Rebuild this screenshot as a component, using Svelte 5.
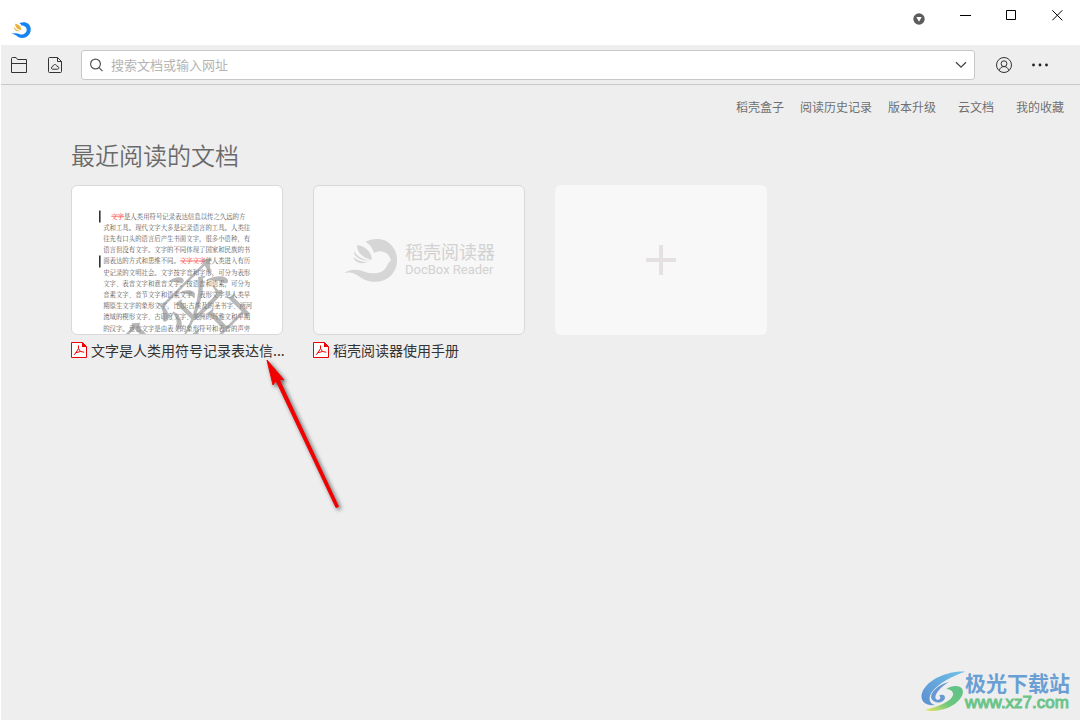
<script lang="ts">
  interface NavLink {
    label: string;
    href: string;
  }

  const navLinks: NavLink[] = [
    { label: '稻壳盒子', href: '#box' },
    { label: '阅读历史记录', href: '#history' },
    { label: '版本升级', href: '#upgrade' },
    { label: '云文档', href: '#cloud' },
    { label: '我的收藏', href: '#favorites' }
  ];

  // first line and fifth line carry struck-out words, see `strike`
  const pageLines = [
    { x: 80, before: '', strike: '文字', after: '是人类用符号记录表达信息以传之久远的方' },
    { x: 0, before: '式和工具。现代文字大多是记录语言的工具。人类往' },
    { x: 0, before: '往先有口头的语言后产生书面文字，很多小语种，有' },
    { x: 0, before: '语言但没有文字。文字的不同体现了国家和民族的书' },
    { x: 0, before: '面表达的方式和思维不同。', strike: '文字文字', after: '使人类进入有历' },
    { x: 0, before: '史记录的文明社会。文字按字音和字形，可分为表形' },
    { x: 0, before: '文字、表音文字和意音文字。按语音和语素，可分为' },
    { x: 0, before: '音素文字、音节文字和语素文字。表形文字是人类早' },
    { x: 0, before: '期原生文字的象形文字，比如:古埃及的圣书字、两河' },
    { x: 0, before: '流域的楔形文字、古印度文字、美洲的玛雅文和早期' },
    { x: 0, before: '的汉字。意音文字是由表义的象形符号和表音的声旁' }
  ];

  let query = $state('');
</script>

{#snippet pdfIcon()}
  <svg class="pdf-icon" width="16" height="16" viewBox="0 0 16 16" aria-hidden="true">
    <path d="M.5 .5h11l4 4v11H.5z" fill="#fff" stroke="#f00000" />
    <path d="M11 0l5 5h-5z" fill="#f00000" />
    <path d="M7.500 3.500V6.500L4.500 11.500L2.800 12.700M7.500 6.500L9.500 9.500L13.200 10.200M4.500 10.800L9.500 9.500" fill="none" stroke="#f00000" />
  </svg>
{/snippet}

<div class="window">
  <header class="title-bar">
    <svg class="app-logo" width="20" height="18" viewBox="0 0 160 135" role="img" aria-label="DocBox">
      <path d="M68 14C98-6 160 4 158 66C156 120 98 146 58 124C42 112 22 98 0 98C26 90 52 94 70 102C98 110 124 92 126 68C126 44 108 32 84 32C80 24 76 18 68 14z" fill="#1683f5" />
      <path d="M32 18C62 20 84 42 82 68C56 66 34 48 32 18zM22 42C34 58 50 72 74 76C48 84 22 68 22 42z" fill="#e8b13c" />
    </svg>
    <div class="window-controls">
      <button aria-label="Menu">
        <svg width="12" height="12" viewBox="0 0 12 12" class="menu-dot">
          <circle cx="6" cy="6" r="5.700" fill="#5c5c5c" />
          <path d="M3.300 4h5.400L6 8.700z" fill="#fff" />
        </svg>
      </button>
      <button aria-label="Minimize">
        <svg width="11" height="11" viewBox="0 0 11 11"><path d="M0 5.500h11" stroke="#000" /></svg>
      </button>
      <button aria-label="Maximize">
        <svg width="11" height="11" viewBox="0 0 11 11"><path d="M.5 .5h9v9h-9z" fill="none" stroke="#000" /></svg>
      </button>
      <button aria-label="Close">
        <svg width="11" height="11" viewBox="0 0 11 11"><path d="M.3 .3l10 10M10.300 .3L.3 10.300" stroke="#000" /></svg>
      </button>
    </div>
  </header>

  <div class="toolbar">
    <button class="tool-btn" aria-label="Open folder">
      <svg width="16" height="16" viewBox="0 0 16 16" fill="none" stroke="#333">
        <path d="M.5 15.500V1.500Q.5 .5 1.500 .5H5L6.500 2.500H15.500V15.500zM.5 6.500h15" />
      </svg>
    </button>
    <button class="tool-btn" aria-label="Cloud document">
      <svg width="14" height="16" viewBox="0 0 14 16" fill="none" stroke="#333">
        <path d="M9.500 .5H1.500Q.5 .5 .5 1.500V14.500Q.5 15.500 1.500 15.500H12.500Q13.500 15.500 13.500 14.500V4.500zM9.500 .5V4.500H13.500" />
        <path d="M4.500 12.200C2.800 12 2.900 9.600 4.800 9.600C5 7 8.600 6.800 9 9.400C11.300 9.300 11.400 12.200 9.500 12.200z" />
      </svg>
    </button>
    <div class="search-box">
      <svg width="14" height="14" viewBox="0 0 14 14" fill="none" stroke="#555" stroke-width="1.200">
        <circle cx="5.500" cy="6" r="4.900" />
        <path d="M9 9.700l3.500 3.500" />
      </svg>
      <input type="text" aria-label="搜索文档或输入网址" placeholder="搜索文档或输入网址" bind:value={query} />
      <button class="drop-btn" aria-label="Show history">
        <svg width="12" height="8" viewBox="0 0 12 8" fill="none" stroke="#444" stroke-width="1.300"><path d="M1 1.200l5 5 5-5" /></svg>
      </button>
    </div>
    <button class="tool-btn" aria-label="Account">
      <svg width="16" height="16" viewBox="0 0 16 16" fill="none" stroke="#333">
        <circle cx="8" cy="8" r="7.500" />
        <circle cx="8" cy="6.700" r="2.900" />
        <path d="M3.300 13.500C4 10.800 5.500 9.600 8 9.600s4 1.200 4.700 3.900" />
      </svg>
    </button>
    <button class="tool-btn" aria-label="More">
      <svg width="16" height="4" viewBox="0 0 16 4" fill="#222">
        <circle cx="1.500" cy="2" r="1.400" />
        <circle cx="8" cy="2" r="1.400" />
        <circle cx="14.500" cy="2" r="1.400" />
      </svg>
    </button>
  </div>

  <nav class="quick-links">
    {#each navLinks as link}
      <a href={link.href}>{link.label}</a>
    {/each}
  </nav>

  <main>
    <h1>最近阅读的文档</h1>
    <div class="documents">
      <div class="document">
        <a class="document-link" href="#doc-1">
          <span class="card page">
            <svg class="page-preview" viewBox="0 0 2100 1480" aria-hidden="true">
              <g font-size="64" fill="#555">
                {#each pageLines as line, i}
                  <text x={312 + line.x} y={325 + i * 112}>{line.before}{#if line.strike}<tspan class="strike">{line.strike}</tspan>{line.after}{/if}</text>
                {/each}
              </g>
              <path d="M278 245v120M278 695v120" stroke="#333" stroke-width="16" />
              <text class="stamp" font-size="860" transform="translate(619 2333) rotate(-45)">机密</text>
            </svg>
          </span>
          <span class="caption">{@render pdfIcon()}<span class="name">文字是人类用符号记录表达信...</span></span>
        </a>
        <svg class="pointer" width="90" height="165" viewBox="0 0 90 165" aria-hidden="true">
          <path d="M6 5L12 30L15 25.500L75 152.500L77.500 151.500L18 24L23 25z" fill="#f00000" stroke="#f00000" stroke-linejoin="round" />
        </svg>
      </div>

      <div class="document">
        <a class="document-link" href="#doc-2">
          <span class="card">
            <svg width="54" height="45" viewBox="130 175 160 135" fill="#d6d6d6" aria-hidden="true">
              <path d="M196 187C216 175 249 173 270 192C297 216 298 260 275 285C250 312 209 312 183 294C166 281 153 275 133 280C153 266 176 270 193 276C226 288 257 278 263 253L273 242C266 216 242 209 222 220C218 207 210 193 196 187z" />
              <path d="M171 196C196 199 217 218 215 241C190 236 170 219 171 196zM162 213C169 229 186 240 210 243C184 244 160 233 162 213zM160 231C169 242 185 246 204 247C185 255 163 249 160 231z" />
            </svg>
            <span class="brand">
              <span class="brand-cn">稻壳阅读器</span>
              <span class="brand-en">DocBox Reader</span>
            </span>
          </span>
          <span class="caption">{@render pdfIcon()}<span class="name">稻壳阅读器使用手册</span></span>
        </a>
      </div>

      <button class="card add" aria-label="Add document">
        <svg width="30" height="30" viewBox="0 0 30 30"><path d="M15 0v30M0 15h30" stroke="#e5e1e2" stroke-width="4" /></svg>
      </button>
    </div>
  </main>

  <div class="site-mark">
    <svg width="44" height="42" viewBox="0 0 132 126" aria-hidden="true">
      <defs>
        <linearGradient id="mark-blue" x1="0" y1="1" x2="1" y2="0">
          <stop offset="0" stop-color="#5b8fd0" />
          <stop offset="1" stop-color="#6fc0e8" />
        </linearGradient>
        <linearGradient id="mark-green" x1="0" y1="1" x2="1" y2="0">
          <stop offset="0" stop-color="#e9e65a" />
          <stop offset=".45" stop-color="#6cc77f" />
          <stop offset="1" stop-color="#5fc08a" />
        </linearGradient>
      </defs>
      <path d="M132 2C84 0 20 22 3 66C-4 90 14 106 42 102C26 98 20 84 32 64C50 38 92 16 132 2z" fill="url(#mark-blue)" />
      <path d="M84 32C50 42 24 66 32 84C40 100 70 96 72 80C72 72 64 68 54 74C62 78 58 88 48 86C34 78 54 50 84 32z" fill="#6798d4" />
      <path d="M76 54C90 44 116 40 124 54C134 78 98 112 54 118C36 122 24 120 12 116C52 108 90 92 96 72C98 60 88 56 76 54z" fill="url(#mark-green)" />
    </svg>
    <div class="site-text">
      <span class="site-name">极光下载站</span>
      <span class="site-url">www.xz7.com</span>
    </div>
  </div>
</div>

<style>
  :global(body) {
    background: #fff;
  }

  .window {
    position: relative;
    box-sizing: border-box;
    min-height: 100vh;
    border: 1px solid #fff;
    border-top: 0;
    background: #eee;
    color: #333;
    font-family: "Noto Sans CJK SC", sans-serif;
    font-size: 14px;
  }

  button {
    display: flex;
    align-items: center;
    justify-content: center;
    padding: 0;
    border: 0;
    background: none;
    cursor: pointer;
  }

  .title-bar {
    display: flex;
    align-items: flex-start;
    justify-content: space-between;
    height: 45px;
    background: #fff;
  }

  .app-logo {
    margin: 21px 0 0 10px;
  }

  .window-controls {
    display: flex;
  }

  .window-controls button {
    width: 46px;
    height: 31px;
  }

  .menu-dot {
    margin-top: 6px;
  }

  .toolbar {
    display: flex;
    align-items: center;
    height: 39px;
    padding-right: 22px;
    border-bottom: 1px solid #c8c8c8;
  }

  .tool-btn {
    width: 36px;
    height: 36px;
  }

  .search-box {
    display: flex;
    flex: 1;
    align-items: center;
    box-sizing: border-box;
    height: 30px;
    margin: 0 11px 0 8px;
    padding-left: 8px;
    border: 1px solid #c8c8c8;
    border-radius: 3px;
    background: #fff;
  }

  .search-box input {
    flex: 1;
    min-width: 0;
    padding: 0 7px;
    border: 0;
    outline: 0;
    background: none;
    font-family: inherit;
    font-size: 13px;
  }

  .search-box input::placeholder {
    color: #b4b4b4;
  }

  .drop-btn {
    width: 26px;
    height: 28px;
  }

  .quick-links {
    display: flex;
    justify-content: flex-end;
    gap: 16px;
    padding: 13px 16px 0 0;
    font-size: 12px;
    line-height: 18px;
  }

  .quick-links a {
    min-width: 48px;
    color: #707070;
    text-align: center;
    text-decoration: none;
  }

  main {
    padding: 21px 70px 0;
  }

  h1 {
    margin: 0;
    color: #6a6a6a;
    font-size: 24px;
    font-weight: 350;
    line-height: 36px;
  }

  .documents {
    display: flex;
    flex-wrap: wrap;
    gap: 30px;
    margin-top: 12px;
  }

  .document {
    position: relative;
    width: 212px;
  }

  .document-link {
    color: inherit;
    text-decoration: none;
  }

  .card {
    display: flex;
    align-items: center;
    justify-content: center;
    gap: 8px;
    box-sizing: border-box;
    width: 212px;
    height: 150px;
    border: 1px solid #d9d9d9;
    border-radius: 6px;
    background: #f7f7f7;
    overflow: hidden;
  }

  .card.page {
    background: #fff;
  }

  .card.add {
    border-color: transparent;
    background: #f8f8f8;
  }

  .page-preview {
    width: 100%;
    font-family: "Noto Serif CJK SC", "Noto Sans CJK SC", serif;
  }

  .strike {
    fill: #f33;
    text-decoration: line-through;
  }

  .stamp {
    fill: #888;
    fill-opacity: 0.6;
    font-weight: 300;
  }

  .brand {
    display: flex;
    flex-direction: column;
    color: #d2d2d2;
  }

  .brand-cn {
    font-size: 18px;
    line-height: 20px;
  }

  .brand-en {
    font-family: Roboto, sans-serif;
    font-size: 13px;
    line-height: 18px;
  }

  .caption {
    display: flex;
    align-items: center;
    gap: 4px;
    margin-top: 5px;
    line-height: 20px;
    white-space: nowrap;
  }

  .pdf-icon {
    flex: none;
  }

  .pointer {
    position: absolute;
    top: 170px;
    left: 190px;
    filter: drop-shadow(2px 2px 2px rgba(0, 0, 0, 0.6));
    pointer-events: none;
  }

  .site-mark {
    position: absolute;
    right: 10px;
    bottom: 7px;
    display: flex;
    align-items: center;
  }

  .site-text {
    display: flex;
    flex-direction: column;
  }

  .site-name {
    color: #6a9fd4;
    font-size: 21px;
    font-weight: 700;
    line-height: 22px;
  }

  .site-url {
    color: #6cc48a;
    font-family: "Liberation Sans", sans-serif;
    font-size: 17px;
    line-height: 20px;
    -webkit-text-stroke: 1px #6cc48a;
  }
</style>
